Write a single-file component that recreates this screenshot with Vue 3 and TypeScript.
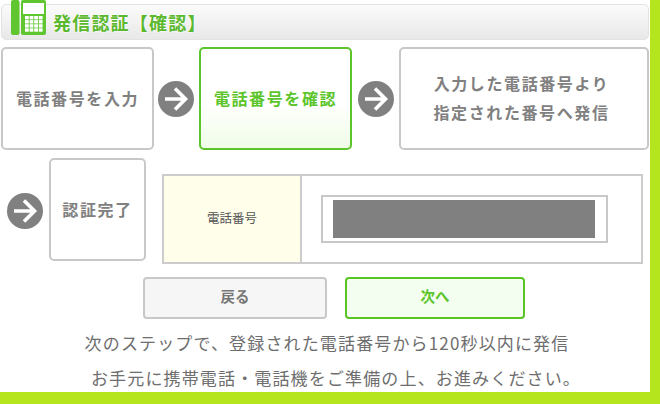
<script setup lang="ts">
const keys: number[] = Array.from({ length: 16 }, (_, i) => i)
</script>

<template>
  <div class="page">
    <header class="title">
      <svg class="phone" width="36" height="36" viewBox="0 0 36 36">
        <rect x="0" y="0" width="8.5" height="35" rx="2" fill="#5fc62f" />
        <rect x="10" y="0" width="25" height="35" rx="2" fill="#5fc62f" />
        <rect x="12" y="3" width="21" height="11" fill="#fff" />
        <g fill="#fff">
          <rect
            v-for="k in keys"
            :key="k"
            :x="14 + (k % 4) * 4.6"
            :y="16 + Math.floor(k / 4) * 4.1"
            width="3.8"
            height="3.4"
          />
        </g>
      </svg>
      <h1>発信認証【確認】</h1>
    </header>

    <div class="steps">
      <div class="step first">電話番号を入力</div>
      <svg class="arrow a1" width="36" height="36" viewBox="0 0 36 36">
        <circle cx="18" cy="18" r="18" fill="#808080" />
        <path d="M7 18H27M17 7.5L27.5 18L17 28.5" fill="none" stroke="#fff" stroke-width="3.6" />
      </svg>
      <div class="step active">電話番号を確認</div>
      <svg class="arrow a2" width="36" height="36" viewBox="0 0 36 36">
        <circle cx="18" cy="18" r="18" fill="#808080" />
        <path d="M7 18H27M17 7.5L27.5 18L17 28.5" fill="none" stroke="#fff" stroke-width="3.6" />
      </svg>
      <div class="step wide">入力した電話番号より<br />指定された番号へ発信</div>
    </div>

    <div class="second">
      <svg class="arrow a3" width="36" height="36" viewBox="0 0 36 36">
        <circle cx="18" cy="18" r="18" fill="#808080" />
        <path d="M7 18H27M17 7.5L27.5 18L17 28.5" fill="none" stroke="#fff" stroke-width="3.6" />
      </svg>
      <div class="step done">認証完了</div>
      <div class="table">
        <div class="label">電話番号</div>
        <div class="value">
          <div class="input"><div class="mask"></div></div>
        </div>
      </div>
    </div>

    <div class="buttons">
      <button class="btn back">戻る</button>
      <button class="btn next">次へ</button>
    </div>

    <p class="note first-note">次のステップで、登録された電話番号から120秒以内に発信</p>
    <p class="note second-note">お手元に携帯電話・電話機をご準備の上、お進みください。</p>
  </div>
</template>

<style>
html, body {
  margin: 0;
  background: #b5e61d;
}
</style>

<style scoped>
.page {
  width: 650px;
  height: 392px;
  background: #fff;
  overflow: hidden;
  font-family: "Noto Sans CJK JP", "Noto Sans", sans-serif;
  box-sizing: border-box;
  padding-top: 4px;
}
.title {
  margin-left: 1px;
  width: 648px;
  height: 36px;
  box-sizing: border-box;
  border: 1px solid #e3e3e3;
  border-radius: 5px;
  background: linear-gradient(#fbfbfb, #e8e8e8);
  display: flex;
  align-items: center;
  position: relative;
}
.phone {
  position: absolute;
  left: 9px;
  top: -5px;
}
h1 {
  margin: 0 0 0 51px;
  font-size: 18px;
  line-height: 35px;
  font-weight: 700;
  letter-spacing: 1.2px;
  color: #5cb82e;
  text-shadow: 0 0 2px #fff, 0 0 2px #fff;
}
.steps {
  display: flex;
  align-items: center;
  margin: 7px 0 0 1px;
}
.step {
  box-sizing: border-box;
  height: 103px;
  border: 2px solid #c8c8c8;
  border-radius: 5px;
  background: #fff;
  color: #808080;
  font-size: 16px;
  font-weight: 700;
  letter-spacing: 1.6px;
  line-height: 29px;
  display: flex;
  align-items: center;
  justify-content: center;
  text-align: center;
}
.first,
.active {
  width: 153px;
}
.active {
  border-color: #5cc52b;
  color: #5cc52b;
  background: linear-gradient(#fff 55%, #effde6);
}
.wide {
  width: 250px;
  padding: 0 5px 2px 0;
}
.arrow {
  flex: none;
}
.a1 {
  margin: 0 5px 0 4px;
}
.a2 {
  margin: 0 5px 0 6px;
}
.second {
  display: flex;
  align-items: flex-start;
  margin: 8px 0 0 7px;
}
.a3 {
  margin: 35px 6px 0 0;
}
.done {
  width: 97px;
}
.table {
  margin: 16px 0 0 16px;
  width: 481px;
  height: 90px;
  box-sizing: border-box;
  border: 2px solid #cccccc;
  display: flex;
}
.label {
  width: 136px;
  padding-bottom: 3px;
  box-sizing: content-box;
  background: #fffeea;
  border-right: 2px solid #cccccc;
  font-size: 12.5px;
  color: #555;
  display: flex;
  align-items: center;
  justify-content: center;
}
.value {
  flex: 1;
  padding: 19px 0 0 19px;
}
.input {
  box-sizing: border-box;
  width: 287px;
  height: 48px;
  border: 2px solid #c8c8c8;
  padding: 3px 0 0 10px;
}
.mask {
  width: 262px;
  height: 38px;
  background: #808080;
}
.buttons {
  display: flex;
  gap: 18px;
  margin: 13px 0 0 143px;
}
.btn {
  box-sizing: border-box;
  height: 42px;
  border-radius: 4px;
  font-family: inherit;
  font-size: 14.5px;
  font-weight: 700;
  padding: 0 0 5px;
}
.back {
  width: 184px;
  background: #f6f6f6;
  border: 2px solid #c8c8c8;
  color: #777;
}
.next {
  width: 180px;
  background: #f3fef0;
  border: 2px solid #59c425;
  color: #5cc52b;
}
.note {
  margin: 0;
  text-align: center;
  box-sizing: border-box;
  width: 654px;
  font-size: 17px;
  line-height: 35px;
  letter-spacing: 1.15px;
  color: #6e6e6e;
}
.first-note {
  margin-top: 6px;
}
.second-note {
  padding-left: 18px;
}
</style>
